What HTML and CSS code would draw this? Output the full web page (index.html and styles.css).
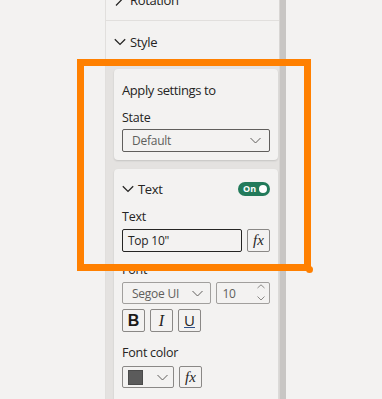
FILE: index.html
```html
<!DOCTYPE html>
<html>
<head>
<meta charset="utf-8">
<link rel="stylesheet" href="styles.css">
</head>
<body>
<div class="screen">
  <div class="gutter"></div>
  <div class="pane">
    <div class="pane-body">
      <div class="section-row rotation">
        <div class="section-inner">
          <svg class="chev-right" width="8" height="12" viewBox="0 0 8 12"><path d="M2 0.5 L7.3 6 L2 11.5" fill="none" stroke="#252423" stroke-width="1.2"/></svg>
          <span>Rotation</span>
        </div>
      </div>
      <div class="section-row style">
        <svg class="chev-down" width="12" height="8" viewBox="0 0 12 8"><path d="M0.8 1.2 L6 6.4 L11.2 1.2" fill="none" stroke="#252423" stroke-width="1.3"/></svg>
        <span>Style</span>
      </div>
      <div class="cards">
        <div class="card card-apply">
          <div class="card-title">Apply settings to</div>
          <div class="label">State</div>
          <div class="select select-dark">
            <span>Default</span>
            <svg width="11" height="7" viewBox="0 0 11 7"><path d="M0.5 1 L5.5 6 L10.5 1" fill="none" stroke="#605e5c" stroke-width="1"/></svg>
          </div>
        </div>
        <div class="card card-text">
          <div class="card-head">
            <svg class="chev-down" width="12" height="8" viewBox="0 0 12 8"><path d="M0.8 1.2 L6 6.4 L11.2 1.2" fill="none" stroke="#252423" stroke-width="1.3"/></svg>
            <span>Text</span>
            <div class="toggle"><b>On</b><i></i></div>
          </div>
          <div class="label">Text</div>
          <div class="row">
            <div class="input">Top 10"</div>
            <div class="fx">fx</div>
          </div>
          <div class="label label-font">Font</div>
          <div class="row">
            <div class="select select-font">
              <span>Segoe UI</span>
              <svg width="11" height="7" viewBox="0 0 11 7"><path d="M0.5 1 L5.5 6 L10.5 1" fill="none" stroke="#605e5c" stroke-width="1"/></svg>
            </div>
            <div class="select select-size">
              <span>10</span>
              <svg class="spin" width="8" height="18" viewBox="0 0 8 18"><path d="M0.5 4 L4 0.8 L7.5 4" fill="none" stroke="#8a8886" stroke-width="1"/><path d="M0.5 12.5 L4 16 L7.5 12.5" fill="none" stroke="#8a8886" stroke-width="1"/></svg>
            </div>
          </div>
          <div class="row biu">
            <div class="fmt fmt-b">B</div>
            <div class="fmt fmt-i">I</div>
            <div class="fmt fmt-u">U</div>
          </div>
          <div class="label label-color">Font color</div>
          <div class="row">
            <div class="select select-color">
              <span class="swatch"></span>
              <svg width="11" height="7" viewBox="0 0 11 7"><path d="M0.5 1 L5.5 6 L10.5 1" fill="none" stroke="#605e5c" stroke-width="1"/></svg>
            </div>
            <div class="fx">fx</div>
          </div>
        </div>
      </div>
    </div>
    <div class="scrollbar"></div>
  </div>
  <div class="highlight"><span class="dot"></span></div>
</div>
</body>
</html>
```

FILE: styles.css
```css
* { box-sizing: border-box; }
html, body { margin: 0; padding: 0; }
body {
  background: #f3f2f1;
  font-family: "Open Sans", "Noto Sans", sans-serif;
  color: #252423;
  font-size: 12px;
  letter-spacing: -0.25px;
}
.screen {
  position: relative;
  display: flex;
  width: 382px;
  height: 399px;
  overflow: hidden;
}
.gutter { width: 105px; flex: none; }
.pane {
  width: 181px;
  flex: none;
  display: flex;
  border-left: 1px solid #e1dfdd;
}
.pane-body { width: 173px; flex: none; }
.scrollbar {
  width: 7px;
  flex: none;
  background: #c8c6c4;
  border-left: 1px solid #d8d6d4;
}
.section-row {
  display: flex;
  align-items: center;
  padding-left: 8px;
  font-size: 13px;
  letter-spacing: -0.35px;
}
.rotation {
  height: 21px;
  border-bottom: 1px solid #e1dfdd;
  overflow: hidden;
  align-items: flex-start;
}
.section-inner {
  display: flex;
  align-items: center;
  gap: 8px;
  height: 22px;
  margin-top: -11px;
  line-height: 16px;
}
.style {
  height: 41px;
  gap: 4px;
}
.style span { line-height: 16px; }
.chev-down, .chev-right { display: block; flex: none; }
.cards {
  background: #e4e2e0;
  padding: 7px 1px 0 8px;
  display: flex;
  flex-direction: column;
  gap: 9px;
  height: 400px;
}
.card {
  background: #f3f2f1;
  border-radius: 4px;
  box-shadow: 0 1px 2px rgba(0,0,0,0.14);
  padding: 0 8px;
}
.card-apply { padding-top: 12px; padding-bottom: 8px; }
.card-text { padding-top: 11px; padding-bottom: 20px; }
.card-title { font-size: 13px; line-height: 18px; letter-spacing: -0.4px; }
.label { font-size: 12.5px; line-height: 18px; margin-top: 10px; margin-bottom: 2px; }
.card-text .label { margin-bottom: 3px; }
.card-text .label-font { margin-top: 9px; }
.card-text .label-color { margin-top: 12px; margin-bottom: 4px; }
.card-head {
  display: flex;
  align-items: center;
  height: 18px;
  font-size: 13px;
  gap: 4px;
  letter-spacing: -0.35px;
}
.toggle {
  margin-left: auto;
  width: 32px;
  height: 14px;
  border-radius: 7px;
  background: #227a5a;
  display: flex;
  align-items: center;
  padding: 0 3px 0 5px;
  justify-content: space-between;
  letter-spacing: 0;
}
.toggle b { color: #fff; font-size: 9px; line-height: 14px; font-weight: 700; }
.toggle i { width: 8px; height: 8px; border-radius: 50%; background: #fff; display: block; }
.select {
  display: flex;
  align-items: center;
  justify-content: space-between;
  border: 1px solid #8a8886;
  border-radius: 2px;
  background: #f3f2f1;
  color: #605e5c;
  font-size: 12px;
}
.select span { line-height: 16px; padding-top: 1px; }
.select svg { display: block; flex: none; }
.select-dark {
  height: 23px;
  border-color: #605e5c;
  padding: 0 8px 0 9px;
}
.row { display: flex; gap: 5px; }
.input {
  width: 120px;
  height: 23px;
  border: 1px solid #252423;
  border-radius: 2px;
  padding-left: 5px;
  font-size: 12px;
  line-height: 22px;
  color: #252423;
}
.fx {
  width: 23px;
  height: 23px;
  border: 1px solid #8a8886;
  border-radius: 2px;
  font-family: "Liberation Serif", "DejaVu Serif", serif;
  font-style: italic;
  font-size: 15px;
  line-height: 20px;
  text-align: center;
  color: #252423;
  letter-spacing: 0;
}
.select-font { width: 90px; height: 22px; padding: 0 7px 0 9px; border-color: #a19f9d; }
.select-size { width: 54px; height: 22px; padding: 0 4px 0 5px; border-color: #a19f9d; }
.biu { margin-top: 5px; }
.fmt {
  width: 23px;
  height: 23px;
  border: 1px solid #8a8886;
  border-radius: 2px;
  text-align: center;
  line-height: 21px;
  color: #252423;
  letter-spacing: 0;
}
.fmt-b { font-weight: 700; font-size: 16px; font-family: "Liberation Sans", sans-serif; color: #1b1a19; }
.fmt-i { font-style: italic; font-family: "Liberation Serif", serif; font-size: 16px; }
.fmt-u { text-decoration: underline; text-decoration-color: #2b4f8a; font-size: 15px; }
.select-color { width: 52px; height: 22px; padding: 0 5px 0 5px; }
.swatch {
  width: 15px;
  height: 15px;
  background: #5b5b5b;
  border: 1px solid #4a4a4a;
  display: block;
  padding: 0;
}
.select-color + .fx { height: 22px; }
.highlight {
  position: absolute;
  left: 77px;
  top: 59px;
  width: 234px;
  height: 212px;
  border: 7px solid #ff8000;
}
.dot {
  position: absolute;
  right: -9px;
  bottom: -9px;
  width: 7px;
  height: 7px;
  border-radius: 50%;
  background: #ff8000;
}
```
